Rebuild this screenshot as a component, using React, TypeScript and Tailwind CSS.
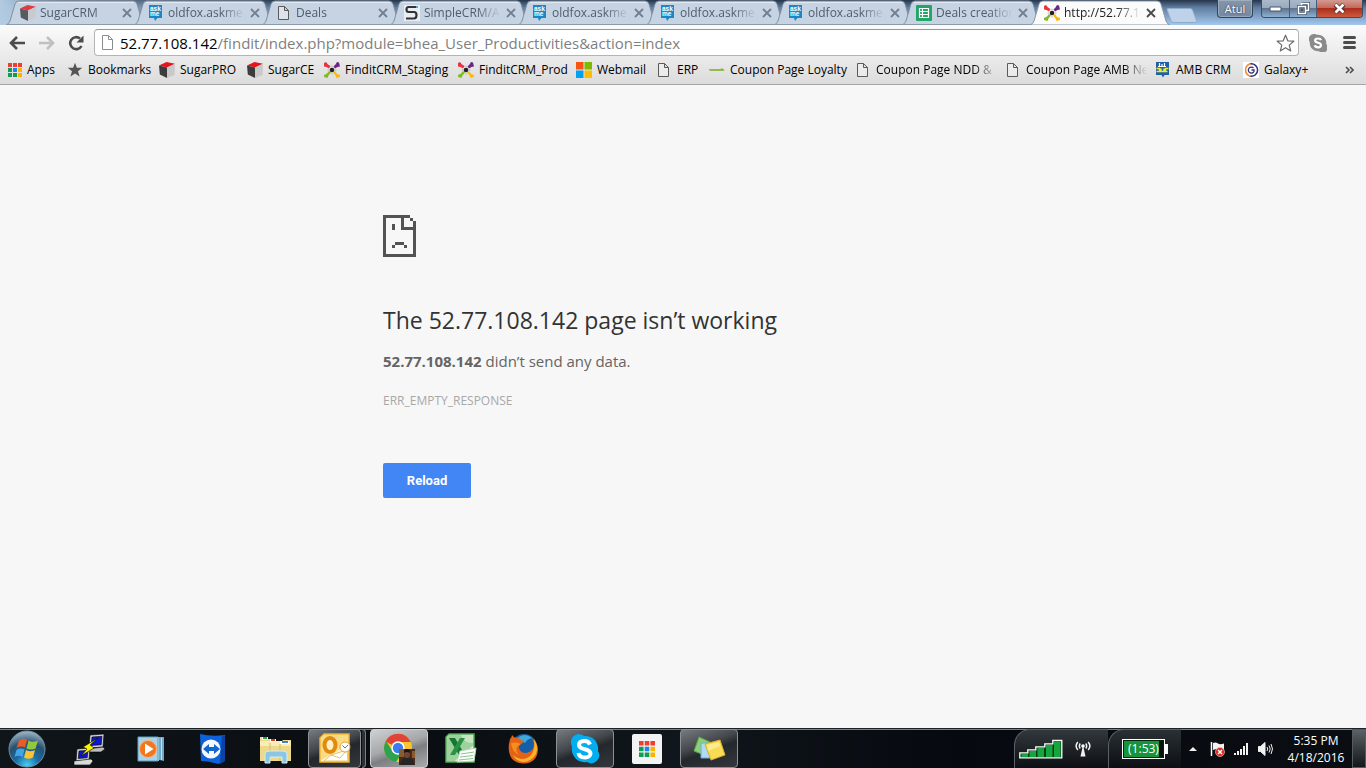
import React from "react";

type IconProps = { className?: string };

const Cube = ({ className = "" }: IconProps) => (
  <svg viewBox="0 0 16 16" className={`size-4 shrink-0 ${className}`} aria-hidden="true">
    <path d="M0 3.500 7.500 0 16 1.800 8 5.500z" fill="#e8131b" />
    <path d="M0 3.500 8 5.500V16L.8 12.500z" fill="#3c3c3e" />
    <path d="M8 5.500 16 1.800 15.500 13 8 16z" fill="#c9c9ca" />
  </svg>
);

const AskMe = () => (
  <svg viewBox="0 0 16 16" className="size-4 shrink-0" aria-hidden="true">
    <path d="M1 0h13v13H9.500L7 16l-1-3H1z" fill="#1b86c8" />
    <g fill="#fff" fontSize="6.500" fontWeight="700" fontFamily="Liberation Sans, sans-serif">
      <text x="2" y="5.500">ask</text>
      <text x="2" y="10.500">me</text>
    </g>
  </svg>
);

const FileIcon = () => (
  <svg viewBox="0 0 16 16" className="size-4 shrink-0" fill="#f4f4f4" fillOpacity=".5" stroke="#5a5a5a" aria-hidden="true">
    <path d="M2.500 1.500h6l4 4v9h-10zM8.500 1.500v4h4" />
  </svg>
);

const SimpleS = () => (
  <svg viewBox="0 0 16 16" className="size-4 shrink-0" aria-hidden="true">
    <path d="M0 0h16v16H0z" fill="#e9eef4" />
    <path d="M13 2H4.500Q2.500 2 2.500 4.500T4.500 7H10q2.500 0 2.500 3.200T10 13.500H2" fill="none" stroke="#333" strokeWidth="2.200" />
    <path d="M12 1h2v2h-2z" fill="#58a6d8" />
  </svg>
);

const Sheets = () => (
  <svg viewBox="0 0 16 16" className="size-4 shrink-0" aria-hidden="true">
    <rect width="16" height="16" rx="1" fill="#23a566" />
    <path d="M3.500 3.500h9v9h-9zM3.500 6.500h9M3.500 9.500h9M6.500 3.500v9" fill="none" stroke="#fff" strokeWidth="1.200" />
  </svg>
);

const Findit = () => (
  <svg viewBox="0 0 16 16" className="size-4 shrink-0" aria-hidden="true">
    <path d="M0 1 2 0l2 2.500L6.500 4 5 6.500 2.500 5 0 4.500z" fill="#e8343e" />
    <path d="m16 4.500-1-4L13 0l-1.500 2.500L9.500 4.500 11 6.500 13.500 5z" fill="#6c2784" />
    <path d="m0 13 3-1.500L5 9l2 1.500-2.500 3-1 2.500L0 15z" fill="#83bb25" />
    <path d="m16 13-3-1-2-3-2 1.500 2.500 3 1 2.500 3.500-1z" fill="#fbba10" />
    <circle cx="8" cy="8" r="2.300" fill="#222" />
    <path d="M5.500 8H3.500M10.500 8h2M8 10.500v2M8 3.500v2" stroke="#c2b4b4" />
  </svg>
);

const GridDots = ({ className = "" }: IconProps) => (
  <svg viewBox="0 0 14 14" className={`shrink-0 ${className}`} aria-hidden="true">
    <path d="M0 0h4v4H0zM5 0h4v4H5zM10 0h4v4h-4z" fill="#ee3e32" />
    <path d="M0 5h4v4H0zM0 10h4v4H0zM5 10h4v4H5z" fill="#0f9d58" />
    <path d="M5 5h4v4H5z" fill="#1a86ee" />
    <path d="M10 5h4v4h-4zM10 10h4v4h-4z" fill="#fbb300" />
  </svg>
);

const StarSolid = () => (
  <svg viewBox="0 0 16 16" className="size-4 shrink-0" aria-hidden="true">
    <path d="m8 .8 1.900 5h5.400L11 9.200l1.600 5.400L8 11.500l-4.600 3.100L5 9.200.7 5.800h5.400z" fill="#555" />
  </svg>
);

const Microsoft = () => (
  <svg viewBox="0 0 16 16" className="size-4 shrink-0" aria-hidden="true">
    <path d="M0 0h7.500v7.500H0z" fill="#f65314" />
    <path d="M8.500 0H16v7.500H8.500z" fill="#7cbb00" />
    <path d="M0 8.500h7.500V16H0z" fill="#00a1f1" />
    <path d="M8.500 8.500H16V16H8.500z" fill="#ffbb00" />
  </svg>
);

const Dash = () => (
  <svg viewBox="0 0 16 16" className="size-4 shrink-0" aria-hidden="true">
    <path d="M0 7.500h11l1-.5h2l1 1.500H1z" fill="#7dab3a" stroke="#8fbc52" />
  </svg>
);

const Amb = () => (
  <svg viewBox="0 0 16 16" className="size-4 shrink-0" aria-hidden="true">
    <path d="M1 0h13v13H9.500L8 15.500 6.500 13H1z" fill="#215fa8" />
    <path d="M4.500 1v4M7 2v3M9.500 1v4M3 4.500h8" stroke="#fff" strokeWidth="1.200" />
    <path d="M1.500 6.500h3v3M6 6.500v3h3v-3M10.500 10V6.500h3M1.500 9.500h11" fill="none" stroke="#e9ec28" strokeWidth="1.500" />
  </svg>
);

const Galaxy = () => (
  <svg viewBox="0 0 16 16" className="size-4 shrink-0" fill="none" aria-hidden="true">
    <path d="M0 0h16v16H0z" fill="#fff" />
    <path d="M9 1.500a6.500 6.500 0 1 0 0 13" stroke="#ee8a30" strokeWidth="1.500" />
    <path d="M7.500 1.800a6.300 6.300 0 1 1 0 12.500" stroke="#33307c" strokeWidth="1.500" />
    <path d="M10.500 6A3 3 0 1 0 11 9.500V8H8.500" stroke="#33307c" strokeWidth="1.300" />
  </svg>
);

const tabs = [
  { title: "SugarCRM", icon: <Cube className="opacity-80" /> },
  { title: "oldfox.askme.", icon: <AskMe /> },
  { title: "Deals", icon: <FileIcon /> },
  { title: "SimpleCRM/A", icon: <SimpleS /> },
  { title: "oldfox.askme.", icon: <AskMe /> },
  { title: "oldfox.askme.", icon: <AskMe /> },
  { title: "oldfox.askme.", icon: <AskMe /> },
  { title: "Deals creation", icon: <Sheets /> },
  { title: "http://52.77.10", icon: <Findit />, active: true },
];

const bookmarks = [
  { label: "Apps", icon: <GridDots className="size-[14px]" />, width: "w-[59px]" },
  { label: "Bookmarks", icon: <StarSolid />, width: "w-[92px]" },
  { label: "SugarPRO", icon: <Cube />, width: "w-[88px]" },
  { label: "SugarCE", icon: <Cube />, width: "w-[77px]" },
  { label: "FinditCRM_Staging", icon: <Findit />, width: "w-[134px]" },
  { label: "FinditCRM_Prod", icon: <Findit />, width: "w-[118px]" },
  { label: "Webmail", icon: <Microsoft />, width: "w-[80px]" },
  { label: "ERP", icon: <FileIcon />, width: "w-[53px]" },
  { label: "Coupon Page Loyalty", icon: <Dash />, width: "w-[146px]" },
  { label: "Coupon Page NDD &", icon: <FileIcon />, width: "w-[150px]", fade: true },
  { label: "Coupon Page AMB Ne", icon: <FileIcon />, width: "w-[150px]", fade: true },
  { label: "AMB CRM", icon: <Amb />, width: "w-[88px]" },
  { label: "Galaxy+", icon: <Galaxy />, width: "w-[80px]" },
];

const fadeMask = "[mask-image:linear-gradient(to_right,black_calc(100%-24px),transparent)]";

function Tab({ title, icon, active }: { title: string; icon: React.ReactNode; active?: boolean }) {
  return (
    <div className={`relative h-[25px] min-w-0 max-w-32 flex-1 basis-32 ${active ? "z-10" : ""}`}>
      <svg viewBox="0 0 140 25" preserveAspectRatio="none" className="absolute inset-y-0 left-0 h-full w-[calc(100%+12px)]" aria-hidden="true">
        <path
          d="M0 25 Q3 24 4 21L9 4Q10 1 13 1H127Q130 1 131 4L136 21Q137 24 140 25z"
          fill={active ? "#fbfbfb" : "#c6d3e2"}
          stroke={active ? "#8794a3" : "#7f8fa2"}
        />
        {!active && <path d="M12 2.500H128" stroke="#fff" strokeOpacity=".5" />}
        {!active && <path d="M0 24.500H140" stroke="#8c99a8" />}
      </svg>
      <div className="relative flex h-full items-center gap-1 pl-[14px]">
        {icon}
        <button role="tab" aria-selected={!!active} className={`min-w-0 flex-1 text-left text-xs whitespace-nowrap ${fadeMask} ${active ? "text-[#222]" : "text-[#4f5c6c]"}`}>
          {title}
        </button>
        <button aria-label={`Close ${title}`} className="mr-px flex w-3 shrink-0 justify-center">
          <svg viewBox="0 0 10 10" className="size-[10px]" stroke={active ? "#4a4a4a" : "#71808f"} strokeWidth="1.800">
            <path d="m1 1 8 8M9 1 1 9" />
          </svg>
        </button>
      </div>
    </div>
  );
}

function TabStrip() {
  return (
    <div className="flex h-[25px] bg-[linear-gradient(to_right,#b3cbe2_0,#b3cbe280_60px,transparent_300px),linear-gradient(to_bottom,#26354b,#5f7d9f_30%,#a3c8ee)] pl-[6px]">
      <div role="tablist" className="flex min-w-0 flex-1">
        {tabs.map((t, i) => (
          <Tab key={i} {...t} />
        ))}
        <button aria-label="New tab" className="ml-2 h-full shrink-0 self-start pt-[5px]">
          <svg viewBox="0 0 32 15" className="h-[15px] w-8">
            <path d="M1 1.500Q1 .5 2.500.5H24q2 0 2.500 1.500l4 10.500q.5 2-1.500 2H8q-2 0-3-2z" fill="#bed3ea" stroke="#8fabc9" />
          </svg>
        </button>
      </div>
      <button className="mr-2 h-[18px] w-9 rounded-b border border-t-0 border-[#35455a] bg-linear-to-b from-[#8795a6] to-[#7389a3] text-[11px] leading-4 text-white shadow-[inset_0_0_0_1px_#c3d2e266] [text-shadow:0_0_2px_#222]">
        Atul
      </button>
      <div className="mr-[3px] flex h-[18px] w-[102px] shrink-0 overflow-hidden rounded-b border border-t-0 border-[#3c4c62]">
        <button aria-label="Minimize" className="flex w-7 items-center justify-center border-r border-[#4a5d75] bg-[linear-gradient(to_bottom,#a9b8ca_0,#9babbe_45%,#5e7590_50%,#8fb0d2_100%)]">
          <svg viewBox="0 0 13 6" className="h-[6px] w-[13px]">
            <path d="M1 1h11v4H1z" fill="#fff" stroke="#45566c" />
          </svg>
        </button>
        <button aria-label="Restore" className="flex w-[27px] items-center justify-center border-r border-[#4a5d75] bg-[linear-gradient(to_bottom,#a9b8ca_0,#9babbe_45%,#5e7590_50%,#8fb0d2_100%)]">
          <svg viewBox="0 0 13 13" className="size-[13px]" fill="none">
            <path d="M4.500 1.500h7v7h-3M1.500 4.500h7v7h-7z" stroke="#45566c" strokeWidth="3" />
            <path d="M4.500 3V1.500h7v7H9M1.500 4.500h7v7h-7z" stroke="#fff" strokeWidth="1.500" />
            <path d="M4 7h2v2H4z" fill="#45566c" />
          </svg>
        </button>
        <button aria-label="Close window" className="flex flex-1 items-center justify-center bg-[linear-gradient(to_bottom,#d29a90_0,#c56a5c_45%,#ad2e1b_50%,#cb5a3e_100%)]">
          <svg viewBox="0 0 13 11" className="h-[11px] w-[13px]">
            <path d="m2 1.500 9 8M11 1.500l-9 8" stroke="#53302f" strokeWidth="4.500" />
            <path d="m2.500 1.500 8 8M10.500 1.500l-8 8" stroke="#fff" strokeWidth="2.600" />
          </svg>
        </button>
      </div>
    </div>
  );
}

function AddressRow() {
  return (
    <div className="flex h-[31px] items-center pt-1">
      <button aria-label="Back" className="ml-2 flex size-[18px] items-center justify-center">
        <svg viewBox="0 0 18 16" className="h-4 w-[18px]" fill="none" stroke="#4c4c4c" strokeWidth="2.600">
          <path d="M17 8H3M9 2 3 8l6 6" />
        </svg>
      </button>
      <button aria-label="Forward" className="ml-3 flex size-[18px] items-center justify-center">
        <svg viewBox="0 0 18 16" className="h-4 w-[18px]" fill="none" stroke="#c0c0c0" strokeWidth="2.600">
          <path d="M1 8h14M9 2l6 6-6 6" />
        </svg>
      </button>
      <button aria-label="Reload this page" className="ml-3 flex size-4 items-center justify-center">
        <svg viewBox="0 0 16 16" className="size-4">
          <path d="M13.500 11A6 6 0 1 1 12 3.500" fill="none" stroke="#4c4c4c" strokeWidth="2.600" />
          <path d="M15.500.5v7h-7z" fill="#4c4c4c" />
        </svg>
      </button>
      <div className="ml-[10px] flex h-[27px] min-w-0 flex-1 items-center rounded-sm border border-[#b4b4b4] border-t-[#979797] bg-white pr-[3px] pl-[5px]">
        <svg viewBox="0 0 14 17" className="h-[17px] w-[14px] shrink-0" fill="#fff" stroke="#8c8c8c" aria-hidden="true">
          <path d="M2.500 1.500h6l4 4v10h-10zM8.500 1.500v4h4" />
        </svg>
        <div role="textbox" aria-label="Address" tabIndex={0} className="ml-[6px] min-w-0 flex-1 truncate text-[15px] leading-6 text-[#7f7f7f]">
          <span className="text-black">52.77.108.142</span>/findit/index.php?module=bhea_User_Productivities&amp;action=index
        </div>
        <button aria-label="Bookmark this page">
          <svg viewBox="0 0 19 18" className="h-[18px] w-[19px]" fill="#fff" stroke="#6c6c6c" strokeWidth="1.200">
            <path d="m9.500 1.200 2.300 5.600 6 .4-4.600 3.900 1.500 5.800-5.200-3.200-5.200 3.200 1.500-5.800L1.200 7.200l6-.4z" strokeLinejoin="round" />
          </svg>
        </button>
      </div>
      <button aria-label="Skype extension" className="ml-[10px]">
        <svg viewBox="0 0 18 18" className="size-[18px]">
          <path d="M5 0a5 5 0 0 1 3 .8A8.200 8.200 0 0 1 17.200 10 5 5 0 0 1 10 17.200 8.200 8.200 0 0 1 .8 8 5 5 0 0 1 5 0z" fill="#8b8b8b" />
          <path d="M12 6.200C11.500 4.800 10.200 4.500 9 4.500c-1.700 0-2.900.7-2.900 2C6.100 9.500 12 8 12 11c0 1.500-1.400 2.300-3 2.300-1.500 0-2.900-.6-3.200-2" fill="none" stroke="#fff" strokeWidth="2.200" />
        </svg>
      </button>
      <button aria-label="Menu" className="mr-[10px] ml-4">
        <svg viewBox="0 0 13 13" className="size-[13px]" stroke="#4c4c4c" strokeWidth="3" strokeLinecap="round">
          <path d="M1.500 1.500h10M1.500 6.500h10M1.500 11.500h10" />
        </svg>
      </button>
    </div>
  );
}

function BookmarksBar() {
  return (
    <nav aria-label="Bookmarks" className="flex h-7 items-center pr-3 pl-2">
      <div className="flex min-w-0 flex-1 overflow-hidden">
        {bookmarks.map((b) => (
          <a key={b.label} href="#" className={`flex shrink-0 items-center gap-[5px] text-xs text-black ${b.width} ${b.fade ? "pr-2" : ""}`}>
            {b.icon}
            <span className={`whitespace-nowrap ${b.fade ? `min-w-0 flex-1 ${fadeMask}` : ""}`}>{b.label}</span>
          </a>
        ))}
      </div>
      <button aria-label="More bookmarks">
        <svg viewBox="0 0 9 8" className="h-2 w-[9px]" fill="none" stroke="#4c4c4c" strokeWidth="1.600">
          <path d="m1 1 3 3-3 3M5 1l3 3-3 3" />
        </svg>
      </button>
    </nav>
  );
}

function ErrorPage() {
  return (
    <main className="flex-1 bg-[#f7f7f7] pt-[130px]">
      <div className="mx-auto max-w-[600px]">
        <svg viewBox="0 0 11 14" className="h-[42px] w-[33px]" fill="#535353" shapeRendering="crispEdges" aria-hidden="true">
          <path d="M0 0h9v1H7v3h4v1H6V1H1v12h9V5h1v9H0zM9 1h1v1H9zM10 2h1v3h-1zM3 3h1v2H3zM4 9h3v1H4zM3 10h1v1H3zM7 10h1v1H7z" />
        </svg>
        <h1 className="mt-12 text-[23px] leading-[30px] text-[#333]">
          The <span className="font-medium">52.77.108.142</span> page isn’t working
        </h1>
        <p className="mt-[14px] text-[15px] leading-6 text-[#646464]">
          <strong>52.77.108.142</strong> didn’t send any data.
        </p>
        <p className="mt-4 text-xs leading-6 text-[#a8a8a8]">ERR_EMPTY_RESPONSE</p>
        <button className="mt-[50px] h-[35px] w-[88px] rounded-xs bg-[#4285f4] font-['Roboto',sans-serif] text-[13px] font-bold text-white">
          Reload
        </button>
      </div>
    </main>
  );
}

const Putty = () => (
  <svg viewBox="0 0 32 32" className="size-8" stroke="#000" strokeWidth=".6">
    <path d="m17 2 14-1-1 13-14 1z" fill="#d4d4d4" />
    <path d="m19 4 10-.7-.8 8.500-10 .7z" fill="#0d16c8" />
    <path d="m14 16 16-2 2 2-4 3H14z" fill="#bdbdbd" />
    <path d="m4 16 13-1-1 12-13 1z" fill="#d4d4d4" />
    <path d="m6 18 9-.7-.8 7.500-9 .7z" fill="#0d16c8" />
    <path d="m1 28 17-2 2 2-3 4H1z" fill="#d8d8d8" />
    <path d="m25 5-15 9 4 2-6 7 13-8-4-3z" fill="#fbf500" />
  </svg>
);

const MediaPlayer = () => (
  <svg viewBox="0 0 32 32" className="size-8">
    <path d="M20 4h9v24l-9-2z" fill="#6faacb" />
    <path d="M26.500 5v22M23.500 4v24" stroke="#bfe0ef" />
    <path d="M3 4h20v24H3z" fill="#a8d2e5" stroke="#5f9fc0" />
    <circle cx="13" cy="16" r="8.500" fill="#f2761c" stroke="#fbb27c" />
    <path d="m10 10.500 8.500 5.500L10 21.500z" fill="#fff" />
  </svg>
);

const TeamViewer = () => (
  <svg viewBox="0 0 32 32" className="size-8">
    <path d="M3 1q12 3 25 1v24q0 2-2 3l-5 2Q11 28 4 28z" fill="#0d62d9" />
    <path d="m25 2 3 1v25l-5 3z" fill="#0a43a5" />
    <circle cx="14" cy="16" r="9.500" fill="#f4f7fb" />
    <path d="m6 16 6-5v3h5v-3l6 5-6 5v-3h-5v3z" fill="#1565cf" />
  </svg>
);

const Explorer = () => (
  <svg viewBox="0 0 34 32" className="h-8 w-[34px]">
    <path d="M2 4h7l1 2h6l1 2h7l1-1h8v21H2z" fill="#eed88a" />
    <path d="M2 8h31v5H2z" fill="#f9ecb4" />
    <path d="M4 4h6v3H4zM12 6h6v3h-6zM22 8h9v3h-9z" fill="#fff" />
    <path d="M5 4h4v2H5z" fill="#2cab3e" />
    <path d="M13 6h4v2h-4z" fill="#d5402d" />
    <path d="M24 8h6v2h-6z" fill="#3488d4" />
    <path d="M12 10v18M22 11v17" stroke="#dabf67" />
    <path d="M7 30V21q0-3 4-3h14q4 0 4 3v9h-5v-6H12v6z" fill="#8bc6e2" stroke="#d4edf7" />
  </svg>
);

const Outlook = () => (
  <svg viewBox="0 0 32 32" className="size-8">
    <path d="M5 1h25v28H1V5z" fill="#fdf3d6" stroke="#f3b01f" strokeWidth="1.500" />
    <path d="M5 2h24v8L17 19 2 27V6z" fill="#fbdc84" />
    <ellipse cx="11" cy="12" rx="5.500" ry="7" fill="#fff1c4" stroke="#e08a10" strokeWidth="4" />
    <path d="m12 22 16-5 1 11H5z" fill="#fff" stroke="#ecc060" />
    <path d="m12 22 9 3 7-8" fill="none" stroke="#ecc060" />
    <circle cx="26" cy="14" r="5" fill="#fff" stroke="#e0a340" />
    <path d="M23.500 12.500 26 15l3-3" stroke="#777" fill="none" />
  </svg>
);

const Chrome = () => (
  <svg viewBox="0 0 32 32" className="size-8">
    <circle cx="15" cy="15" r="14" fill="#f8c630" />
    <path d="M15 15 2.500 8.500A14 14 0 0 1 27.800 9H15z" fill="#df4437" />
    <path d="M2.900 8A14 14 0 0 0 13 29l6-9-9-1.500z" fill="#2fa250" />
    <circle cx="15" cy="15" r="6.700" fill="#fff" />
    <circle cx="15" cy="15" r="5.200" fill="#3b7ded" />
    <path d="M16 16h16v16H16z" fill="#49291b" />
    <path d="M16 16h5v8h-5zM29 18h3v7h-3z" fill="#8a5a30" />
    <path d="M17 32q1-6 5-7h5q4 1 4 7z" fill="#252526" />
    <ellipse cx="24" cy="21" rx="3" ry="4" fill="#71472f" />
    <path d="M21 20q0-4 3-4t3 4q-3-2-6 0z" fill="#181210" />
  </svg>
);

const Excel = () => (
  <svg viewBox="0 0 32 32" className="size-8">
    <path d="M4 1h25v28H1V4z" fill="#eaf6e6" stroke="#4aa653" strokeWidth="1.500" />
    <path d="M4 2h24v11L14 24l-4 4H2V5z" fill="#9dd29d" />
    <path d="M16 2h12v8q-8 1-12-8z" fill="#c6e6c2" />
    <path d="M4 5h6l10 17h-6z" fill="#137832" />
    <path d="M20 5h-5L5 22h5z" fill="#2c9145" />
    <path d="m15 18 16-3-2 13-17 1z" fill="#fff" stroke="#b3d8b3" />
    <path d="m16 21 13-2M15 24l13-1.500M14 27l14-1.500" stroke="#8cc28e" />
  </svg>
);

const Firefox = () => (
  <svg viewBox="0 0 32 32" className="size-8">
    <circle cx="17" cy="14" r="13" fill="#155fa8" />
    <path d="M10 5q8-6 15 0-5 1-7 5-4-1-8-5z" fill="#3fa8dc" />
    <path d="M3 6q2-2 2-4l2.500 2.500Q12 4 14 7l3 1-2 2.500q-4 1-3 5 3 6 9 4 6-2 6-9-1-4-3-6 7 5 7 12-1 14-15 14Q4 30 2 18.500 1 12 3 6z" fill="#e36216" />
    <path d="M27 6q5 8 2 15-5 8-13 8-7-1-10-7 7 6 14 3 9-4 7-19z" fill="#f8b52b" />
    <path d="M4 10q4-1 7 0l3 1-4 3q-2 4 2 8-7-3-8-12z" fill="#f58e1c" />
  </svg>
);

const Skype = () => (
  <svg viewBox="0 0 32 32" className="size-8">
    <path d="M9 1q4 0 6 2a13 13 0 0 1 14 15 8 8 0 0 1-11 11A13 13 0 0 1 3 14Q-1 4 9 1z" fill="#03aef0" />
    <path d="M21 11.500C20 8.500 18 8 15.500 8 12 8 10 9.500 10 12c0 5.500 11.500 3 11.500 8.500 0 2.500-2.500 4-5.500 4-3.500 0-6-1.500-6.500-4.500" fill="none" stroke="#fff" strokeWidth="4" />
  </svg>
);

const AppLauncher = () => (
  <span className="flex size-[30px] items-center justify-center rounded-xs bg-[#f3f3f3]">
    <GridDots className="size-4" />
  </span>
);

const StickyNotes = () => (
  <svg viewBox="0 0 34 32" className="h-8 w-[34px]">
    <path d="m7 4 11 5-6 13L2 18z" fill="#8dcf74" stroke="#5ba646" />
    <path d="M9 10h15v15H9z" fill="#afd9f5" stroke="#6dadd9" />
    <path d="m13 11 15-4 5 15-14 5z" fill="#f8dc55" stroke="#d5ae27" />
    <path d="m15 12 12-3 1 4-12 5z" fill="#fdeb8c" />
  </svg>
);

const apps = [
  { name: "PuTTY", icon: <Putty /> },
  { name: "Windows Media Player", icon: <MediaPlayer /> },
  { name: "TeamViewer", icon: <TeamViewer /> },
  { name: "Windows Explorer", icon: <Explorer /> },
  { name: "Outlook", icon: <Outlook />, state: "stacked" },
  { name: "Google Chrome", icon: <Chrome />, state: "active" },
  { name: "Excel", icon: <Excel /> },
  { name: "Firefox", icon: <Firefox /> },
  { name: "Skype", icon: <Skype />, state: "open" },
  { name: "App Launcher", icon: <AppLauncher /> },
  { name: "Sticky Notes", icon: <StickyNotes />, state: "open" },
];

const openStyle = "rounded-sm border border-[#8b9196] bg-[linear-gradient(160deg,#777b7f_0,#43474b_40%,#24282c_55%,#34383c_100%)]";
const appStyles: Record<string, string> = {
  open: `w-[58px] ${openStyle}`,
  stacked: `w-[53px] ${openStyle}`,
  active: "w-[58px] rounded-sm border border-[#cfd2d4] bg-[linear-gradient(160deg,#cfd0d1_0,#a5a7a8_45%,#7c7f81_60%,#a9abad_100%)]",
};

function Taskbar() {
  return (
    <footer className="flex h-10 items-stretch border-t border-[#1b2329] bg-[linear-gradient(to_right,#10151a_0,#090d12_30%,#10161b_50%,#06090f_70%,#0a0e13_100%)] shadow-[inset_0_1px_0_#71838e]">
      <button aria-label="Start" className="ml-2 flex w-[38px] items-center justify-center">
        <svg viewBox="0 0 38 38" className="size-[38px]">
          <defs>
            <radialGradient id="orb" cx=".5" cy=".95" r=".95">
              <stop offset="0" stopColor="#45d1f5" />
              <stop offset=".35" stopColor="#1a6ba5" />
              <stop offset=".65" stopColor="#28506f" />
              <stop offset="1" stopColor="#a4b9c8" />
            </radialGradient>
          </defs>
          <circle cx="19" cy="19" r="18" fill="url(#orb)" stroke="#6e8fa6" />
          <path d="M11 10.500q4-3 8-.5l-2 7.500q-4-2-8.500.5z" fill="#ee5a26" />
          <path d="M20.500 10.500q4 2.500 9.500 0l-2.500 8q-4.500 2-9 0z" fill="#92c83e" />
          <path d="M8.500 20q4-2.500 8-.5l-2 7.500q-4-2.500-8 0z" fill="#44a5e2" />
          <path d="M18 20q4 2.500 9 0l-2 7.500q-5 2.500-9 0z" fill="#fcc52f" />
        </svg>
      </button>
      <div className="ml-[14px] flex gap-1">
        {apps.map((a) => (
          <div key={a.name} className="flex w-[58px] gap-px">
            <button aria-label={a.name} className={`flex items-center justify-center ${a.state ? appStyles[a.state] : "w-[58px]"}`}>
              {a.icon}
            </button>
            {a.state === "stacked" && <span className="w-1 rounded-r-sm border border-l-0 border-[#7b8085] bg-[#2b3034]" />}
          </div>
        ))}
      </div>
      <div className="ml-auto flex">
        <div className="flex w-[94px] items-center gap-3 rounded-tl-[16px] border-t border-l border-[#596066] bg-linear-to-b from-[#33383c] to-[#0c1014] pl-1">
          <svg viewBox="0 0 44 20" className="h-5 w-11" aria-label="Signal strength">
            <path d="M.8 18.800v-5h8v-3h8v-3h9v-3h8V1.500h9v17.300z" fill="#0a3d1a" stroke="#fff" strokeWidth="1.300" />
            <path d="M2.500 15H9v3H2.500zM10.500 12H17v6h-6.500zM18.500 9H25v9h-6.500zM27 6h6.500v12H27zM35 3h6.500v15H35z" fill="#18a53e" />
          </svg>
          <svg viewBox="0 0 16 16" className="size-4" fill="none" stroke="#f1f1f1" strokeWidth="1.500" aria-label="Wireless">
            <path d="M2.800 1Q-.5 5 2.800 9M5.200 2.500Q3.500 5 5.200 7.500M13.200 1q3.300 4 0 8M10.800 2.500q1.700 2.500 0 5" />
            <path d="m8 4 2.500 11.500h-5z" fill="#f1f1f1" stroke="none" />
            <circle cx="8" cy="5" r="1.800" fill="#fff" stroke="none" />
          </svg>
        </div>
        <div className="flex w-[73px] items-center rounded-tl-[16px] border-t border-l border-[#596066] bg-linear-to-b from-[#2b3034] to-[#0c1014] pl-[13px]">
          <span className="flex h-5 w-[43px] items-center justify-center border border-white bg-[linear-gradient(to_right,#16943a_36px,#06140b_36px)] text-xs text-white shadow-[inset_0_0_0_1px_#06230e]">(1:53)</span>
          <span className="h-[10px] w-[3px] bg-white" />
        </div>
        <button aria-label="Show hidden icons" className="ml-2 flex items-center">
          <svg viewBox="0 0 8 4" className="h-1 w-2">
            <path d="m4 0 4 4H0z" fill="#f0f0f0" />
          </svg>
        </button>
        <div className="ml-[13px] flex items-center gap-[9px]">
          <svg viewBox="0 0 15 16" className="h-4 w-[15px]" aria-label="Action Center">
            <path d="M1.500 1v14" stroke="#fff" strokeWidth="1.500" />
            <path d="M3 2q3-1 5 .5t6 0v7q-3 1-5.500-.5T3 9z" fill="#f3f3f3" />
            <circle cx="10" cy="11" r="4.500" fill="#d8281f" stroke="#f4bab4" strokeWidth=".7" />
            <path d="m8 9 4 4M12 9l-4 4" stroke="#fff" strokeWidth="1.500" />
          </svg>
          <svg viewBox="0 0 15 12" className="h-3 w-[15px]" fill="#f1f1f1" aria-label="Network">
            <path d="M0 10h2v2H0zM3 8h2v4H3zM6 6h2v6H6zM9 3h2v9H9zM12 0h2v12h-2z" />
          </svg>
          <svg viewBox="0 0 15 14" className="h-[14px] w-[15px]" fill="none" stroke="#f1f1f1" aria-label="Volume">
            <path d="M.5 4.500h2L7 .5v13L2.500 9.500h-2z" fill="#f1f1f1" />
            <path d="M9 5q1.500 2 0 4M11 3.500q2.500 3.500 0 7M13 2q3 5 0 10" />
          </svg>
        </div>
        <time className="ml-[7px] flex w-[72px] flex-col items-center justify-center text-center text-xs leading-[17px] text-white">
          <span>5:35 PM</span>
          <span>4/18/2016</span>
        </time>
        <button aria-label="Show desktop" className="w-[14px] border border-[#555c61] bg-linear-to-b from-[#5d6266] to-[#14181c]" />
      </div>
    </footer>
  );
}

export default function App() {
  return (
    <div className="flex min-h-screen flex-col overflow-hidden bg-[#f7f7f7] font-['Open_Sans',sans-serif]">
      <header>
        <TabStrip />
        <div className="border-b border-[#a5a5a5] bg-linear-to-b from-[#fbfbfb] to-[#dcdcdc]">
          <AddressRow />
          <BookmarksBar />
        </div>
      </header>
      <ErrorPage />
      <Taskbar />
    </div>
  );
}
